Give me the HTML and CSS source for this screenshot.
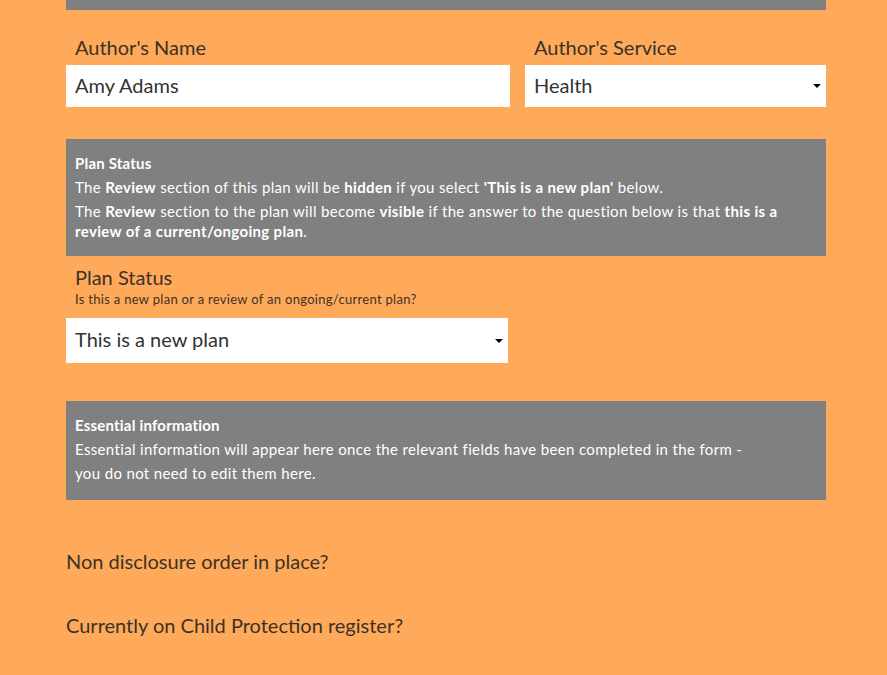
FILE: index.html
```html
<!DOCTYPE html>
<html lang="en">
<head>
    <meta charset="UTF-8">
    <meta name="viewport" content="width=device-width, initial-scale=1.0">
    <title>Plan</title>
    <link rel="stylesheet" href="styles.css">
</head>
<body>
    <div class="form">
        <div class="top-bar"></div>

        <div class="row">
            <div class="field field-name">
                <label class="label" for="author">Author's Name</label>
                <input id="author" class="input" type="text" value="Amy Adams">
            </div>
            <div class="field field-service">
                <label class="label" for="service">Author's Service</label>
                <div class="select">
                    <span>Health</span>
                    <span class="arrow"></span>
                </div>
            </div>
        </div>

        <div class="info info-plan">
            <p class="info-title">Plan Status</p>
            <p>The <b>Review</b> section of this plan will be <b>hidden</b> if you select <b>'This is a new plan'</b> below.</p>
            <p>The <b>Review</b> section to the plan will become <b>visible</b> if the answer to the question below is that <b>this is a review of a current/ongoing plan</b>.</p>
        </div>

        <div class="field field-status">
            <label class="label">Plan Status</label>
            <span class="hint">Is this a new plan or a review of an ongoing/current plan?</span>
            <div class="select select-tall">
                <span>This is a new plan</span>
                <span class="arrow"></span>
            </div>
        </div>

        <div class="info info-essential">
            <p class="info-title">Essential information</p>
            <p>Essential information will appear here once the relevant fields have been completed in the form -<br>you do not need to edit them here.</p>
        </div>

        <p class="question">Non disclosure order in place?</p>
        <p class="question">Currently on Child Protection register?</p>
    </div>
</body>
</html>
```

FILE: styles.css
```css
body {
    margin: 0;
    background-color: #ffaa5b;
    font-family: "Lato", "Open Sans", sans-serif;
    color: #3b3225;
}
.form {
    width: 760px;
    margin-left: 66px;
}
.top-bar {
    height: 10px;
    background-color: #808080;
}
.row {
    display: flex;
    gap: 15px;
    margin-top: 25px;
}
.field {
    display: flex;
    flex-direction: column;
}
.field-name {
    width: 444px;
}
.field-service {
    flex: 1;
}
.label {
    font-size: 20px;
    line-height: 24px;
    padding-left: 9px;
    margin-bottom: 6px;
}
.input, .select {
    box-sizing: border-box;
    height: 42px;
    border: none;
    background: #fff;
    font-family: inherit;
    font-size: 20px;
    color: #333;
    padding: 0 9px 3px 9px;
    margin: 0;
    outline: none;
}
.select {
    display: flex;
    align-items: center;
    justify-content: space-between;
    padding-right: 5px;
}
.select-tall {
    height: 45px;
    width: 442px;
}
.arrow {
    width: 0;
    height: 0;
    border-left: 4px solid transparent;
    border-right: 4px solid transparent;
    border-top: 4px solid #000;
    margin-top: 3px;
}
.info {
    background-color: #808080;
    color: #fff;
    font-size: 15px;
    letter-spacing: 0.35px;
    padding: 14px 9px 15px 9px;
}
.info p {
    margin: 0;
    line-height: 20px;
}
.info-plan {
    margin-top: 32px;
}
.info-plan p + p {
    margin-top: 4px;
}
.info-title {
    font-weight: bold;
    letter-spacing: 0.2px;
}
.info-plan .info-title {
    margin-bottom: 4px;
}
.info-essential {
    margin-top: 38px;
    padding: 12px 9px 15px 9px;
}
.info-essential p {
    line-height: 24px;
}
.field-status {
    margin-top: 9px;
}
.field-status .label {
    margin-bottom: 0;
}
.hint {
    font-size: 13px;
    letter-spacing: 0.3px;
    line-height: 20px;
    padding-left: 9px;
    margin-bottom: 9px;
}
.question {
    font-size: 20px;
    margin: 0;
    line-height: 24px;
}
.info-essential + .question {
    margin-top: 49px;
}
.question + .question {
    margin-top: 40px;
}
```
